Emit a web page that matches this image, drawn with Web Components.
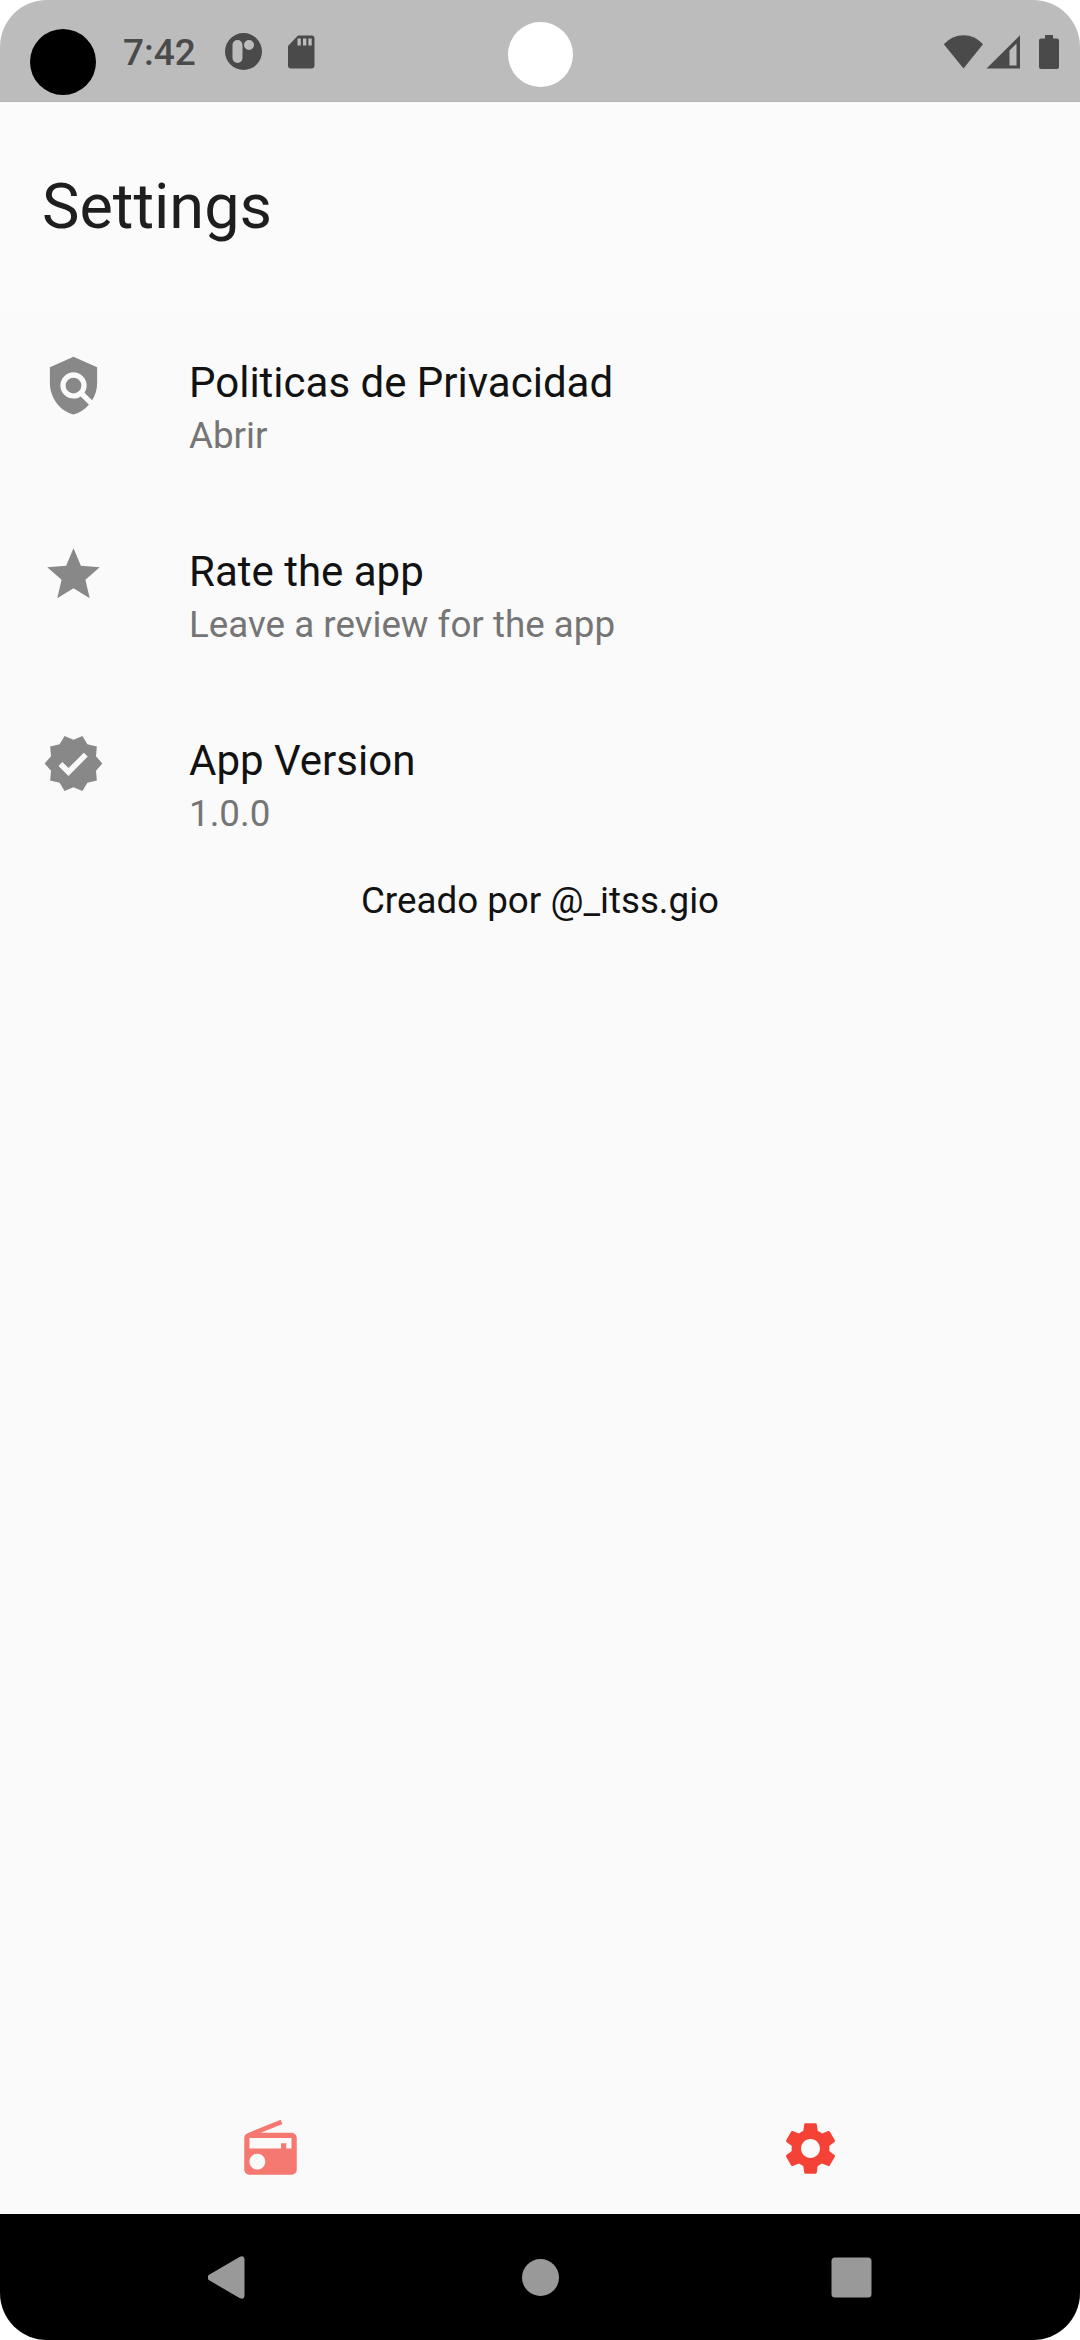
<!DOCTYPE html>
<html lang="es">
<head>
<meta charset="utf-8">
<title>Settings</title>
<style>
  body {
    margin: 0;
    background: #fff;
    font-family: Roboto, sans-serif;
  }
</style>
</head>
<body>
<phone-screen>
  <status-bar slot="status" time="7:42"></status-bar>
  <app-header>Settings</app-header>
  <setting-item icon="policy">Politicas de Privacidad<span slot="detail">Abrir</span></setting-item>
  <setting-item icon="star">Rate the app<span slot="detail">Leave a review for the app</span></setting-item>
  <setting-item icon="verified">App Version<span slot="detail">1.0.0</span></setting-item>
  <credit-line>Creado por @_itss.gio</credit-line>
  <tab-bar slot="tabs"></tab-bar>
  <system-nav slot="nav"></system-nav>
</phone-screen>

<script>
const ICONS = {
  policy: `<path fill-rule="evenodd" d="M21 5l-9-4-9 4v6c0 5.55 3.84 10.74 9 12 2.3-.56 4.33-1.9 5.88-3.71l-3.12-3.12c-1.94 1.29-4.58 1.07-6.29-.64-1.95-1.95-1.95-5.12 0-7.07 1.95-1.95 5.12-1.95 7.07 0 1.71 1.71 1.92 4.35.64 6.29l2.9 2.9C20.29 15.69 21 13.38 21 11V5z"/><circle cx="12" cy="12" r="3"/>`,
  star: `<path d="M12 17.27L18.18 21l-1.64-7.03L22 9.24l-7.19-.61L12 2 9.19 8.63 2 9.24l5.46 4.73L5.82 21z"/>`,
  verified: `<path d="M23 12l-2.44-2.79.34-3.69-3.61-.82-1.89-3.2L12 2.96 8.6 1.5 6.71 4.69 3.1 5.5l.34 3.7L1 12l2.44 2.79-.34 3.7 3.61.82L8.6 22.5l3.4-1.47 3.4 1.46 1.89-3.19 3.61-.82-.34-3.69L23 12zm-12.91 4.72l-3.8-3.81 1.48-1.48 2.32 2.33 5.85-5.87 1.48 1.48-7.33 7.35z"/>`,
  radio: `<path d="M3.24 6.15C2.51 6.43 2 7.17 2 8v12c0 1.1.89 2 2 2h16c1.11 0 2-.9 2-2V8c0-1.11-.89-2-2-2H8.3l8.26-3.34L15.88 1 3.24 6.15zM7 20c-1.66 0-3-1.34-3-3s1.34-3 3-3 3 1.34 3 3-1.34 3-3 3zm13-8h-2v-2h-2v2H4V8h16v4z"/>`,
  settings: `<path d="M19.14 12.94c.04-.3.06-.61.06-.94 0-.32-.02-.64-.07-.94l2.03-1.58c.18-.14.23-.41.12-.61l-1.92-3.32c-.12-.22-.37-.29-.59-.22l-2.39.96c-.5-.38-1.03-.7-1.62-.94l-.36-2.54c-.04-.24-.24-.41-.48-.41h-3.84c-.24 0-.43.17-.47.41l-.36 2.54c-.59.24-1.13.57-1.62.94l-2.39-.96c-.22-.08-.47 0-.59.22L2.74 8.87c-.12.21-.08.47.12.61l2.03 1.58c-.05.3-.09.63-.09.94s.02.64.07.94l-2.03 1.58c-.18.14-.23.41-.12.61l1.92 3.32c.12.22.37.29.59.22l2.39-.96c.5.38 1.03.7 1.62.94l.36 2.54c.05.24.24.41.48.41h3.84c.24 0 .44-.17.47-.41l.36-2.54c.59-.24 1.13-.56 1.62-.94l2.39.96c.22.08.47 0 .59-.22l1.92-3.32c.12-.22.07-.47-.12-.61l-2.01-1.58zM12 15.6c-1.98 0-3.6-1.62-3.6-3.6s1.62-3.6 3.6-3.6 3.6 1.62 3.6 3.6-1.62 3.6-3.6 3.6z"/>`
};

// Material icon, 24dp
class AppIcon extends HTMLElement {
  constructor() {
    super();
    this.attachShadow({ mode: "open" });
  }

  connectedCallback() {
    this.shadowRoot.innerHTML = `
      <style>
        :host { display: block; width: 63px; height: 63px; flex: none; }
        svg { display: block; width: 100%; height: 100%; fill: currentColor; }
      </style>
      <svg viewBox="0 0 24 24">${ICONS[this.getAttribute("name")] || ""}</svg>
    `;
  }
}
customElements.define("app-icon", AppIcon);

class PhoneScreen extends HTMLElement {
  constructor() {
    super();
    this.attachShadow({ mode: "open" });
    this.shadowRoot.innerHTML = `
      <style>
        :host {
          display: flex;
          flex-direction: column;
          width: 1080px;
          height: 2340px;
          border-radius: 47px;
          overflow: hidden;
          background: #fafafa;
        }
        main { flex: 1; }
      </style>
      <slot name="status"></slot>
      <main><slot></slot></main>
      <slot name="tabs"></slot>
      <slot name="nav"></slot>
    `;
  }
}
customElements.define("phone-screen", PhoneScreen);

class StatusBar extends HTMLElement {
  constructor() {
    super();
    this.attachShadow({ mode: "open" });
    this.shadowRoot.innerHTML = `
      <style>
        :host {
          display: flex;
          justify-content: space-between;
          position: relative;
          box-sizing: border-box;
          height: 102px;
          padding: 0 21px 0 123px;
          background: #bcbcbc;
          border-bottom: 1px solid #b4b4b4;
          color: #4a4a4a;
        }
        .side { display: flex; align-items: center; height: 103px; }
        .time { width: 102px; padding-top: 2px; font-size: 37px; font-weight: 500; line-height: 43px; }
        svg { display: block; fill: currentColor; }
        .sd { margin-left: 26px; }
        .signal { margin-left: 3px; }
        .battery { margin-left: 19px; }
        .dot { position: absolute; border-radius: 50%; }
        .black { left: 30px; top: 29px; width: 66px; height: 66px; background: #000; }
        .white { left: 508px; top: 22px; width: 65px; height: 65px; background: #fff; }
      </style>
      <div class="side">
        <span class="time"></span>
        <svg width="37" height="37" viewBox="0 0 37 37"><path fill-rule="evenodd" d="M18.5 0a18.5 18.5 0 1 0 0 37a18.5 18.5 0 1 0 0-37zM12.500 7a5 5 0 0 1 5 5v13a5 5 0 0 1-10 0V12a5 5 0 0 1 5-5zM24 7a5 5 0 1 1 0 10a5 5 0 1 1 0-10z"/></svg>
        <svg class="sd" width="27" height="34" viewBox="0 0 27 34"><path fill-rule="evenodd" d="M10 .5h13.500a3 3 0 0 1 3 3v27a3 3 0 0 1-3 3H3a3 3 0 0 1-3-3V11zM9.500 3.500v7h3.300v-7zM15 3.500v7h3.300v-7zM20.400 3.500v7h3.300v-7z"/></svg>
      </div>
      <div class="side">
        <svg width="40" height="34" viewBox="0 0 40 34"><path d="M20.500 33.500L.8 9.300Q9 .3 20.500 .3T40 9.300z"/></svg>
        <svg class="signal" width="34" height="34" viewBox="0 0 34 34"><path fill-rule="evenodd" d="M.5 33.500L34 .3v33.200zM23.500 15.500V30.500h7V8.500z"/></svg>
        <svg class="battery" width="20" height="34" viewBox="0 0 20 34"><path d="M6 0h8v3.500h4a2 2 0 0 1 2 2V32a2 2 0 0 1-2 2H2a2 2 0 0 1-2-2V5.500a2 2 0 0 1 2-2h4z"/></svg>
      </div>
      <i class="dot black"></i>
      <i class="dot white"></i>
    `;
  }

  connectedCallback() {
    this.shadowRoot.querySelector(".time").textContent = this.getAttribute("time") || "";
  }
}
customElements.define("status-bar", StatusBar);

class AppHeader extends HTMLElement {
  constructor() {
    super();
    this.attachShadow({ mode: "open" });
    this.shadowRoot.innerHTML = `
      <style>
        :host {
          display: flex;
          align-items: center;
          box-sizing: border-box;
          height: 210px;
          padding: 0 42px 2px;
          background: #fbfbfb;
          color: #1e1e1e;
          font-size: 63px;
        }
      </style>
      <span><slot></slot></span>
    `;
  }
}
customElements.define("app-header", AppHeader);

class SettingItem extends HTMLElement {
  constructor() {
    super();
    this.attachShadow({ mode: "open" });
  }

  connectedCallback() {
    this.shadowRoot.innerHTML = `
      <style>
        :host {
          display: flex;
          gap: 84px;
          box-sizing: border-box;
          height: 189px;
          padding: 42px 42px 0;
        }
        app-icon { color: #888; }
        .text { padding-top: 1px; }
        .title { font-size: 42px; line-height: 56px; color: #121212; }
        .detail { font-size: 36.75px; line-height: 50px; color: #757575; }
      </style>
      <app-icon name="${this.getAttribute("icon")}"></app-icon>
      <div class="text">
        <div class="title"><slot></slot></div>
        <div class="detail"><slot name="detail"></slot></div>
      </div>
    `;
  }
}
customElements.define("setting-item", SettingItem);

class CreditLine extends HTMLElement {
  constructor() {
    super();
    this.attachShadow({ mode: "open" });
    this.shadowRoot.innerHTML = `
      <style>
        :host {
          display: block;
          text-align: center;
          font-size: 36.75px;
          line-height: 44px;
          color: #121212;
        }
      </style>
      <slot></slot>
    `;
  }
}
customElements.define("credit-line", CreditLine);

class TabBar extends HTMLElement {
  constructor() {
    super();
    this.attachShadow({ mode: "open" });
    this.shadowRoot.innerHTML = `
      <style>
        :host {
          display: grid;
          grid-template-columns: 1fr 1fr;
          align-items: center;
          justify-items: center;
          height: 131px;
          color: #f44336;
        }
        .off { opacity: 0.7; }
      </style>
      <app-icon class="off" name="radio"></app-icon>
      <app-icon name="settings"></app-icon>
    `;
  }
}
customElements.define("tab-bar", TabBar);

class SystemNav extends HTMLElement {
  constructor() {
    super();
    this.attachShadow({ mode: "open" });
    this.shadowRoot.innerHTML = `
      <style>
        :host {
          display: flex;
          align-items: center;
          justify-content: center;
          gap: 268px;
          height: 126px;
          background: #000;
        }
        svg { display: block; fill: #999; }
      </style>
      <svg width="43" height="43" viewBox="0 0 43 43"><path d="M.7 19L31.500 1q4.500-2 5 2v37q-.5 4-5 2L.7 24q-2.400-2.500 0-5z"/></svg>
      <svg width="43" height="43" viewBox="0 0 43 43"><circle cx="21.500" cy="21.500" r="18.500"/></svg>
      <svg width="43" height="43" viewBox="0 0 43 43"><rect x="1.500" y="1.500" width="40" height="40" rx="3.500"/></svg>
    `;
  }
}
customElements.define("system-nav", SystemNav);
</script>
</body>
</html>
